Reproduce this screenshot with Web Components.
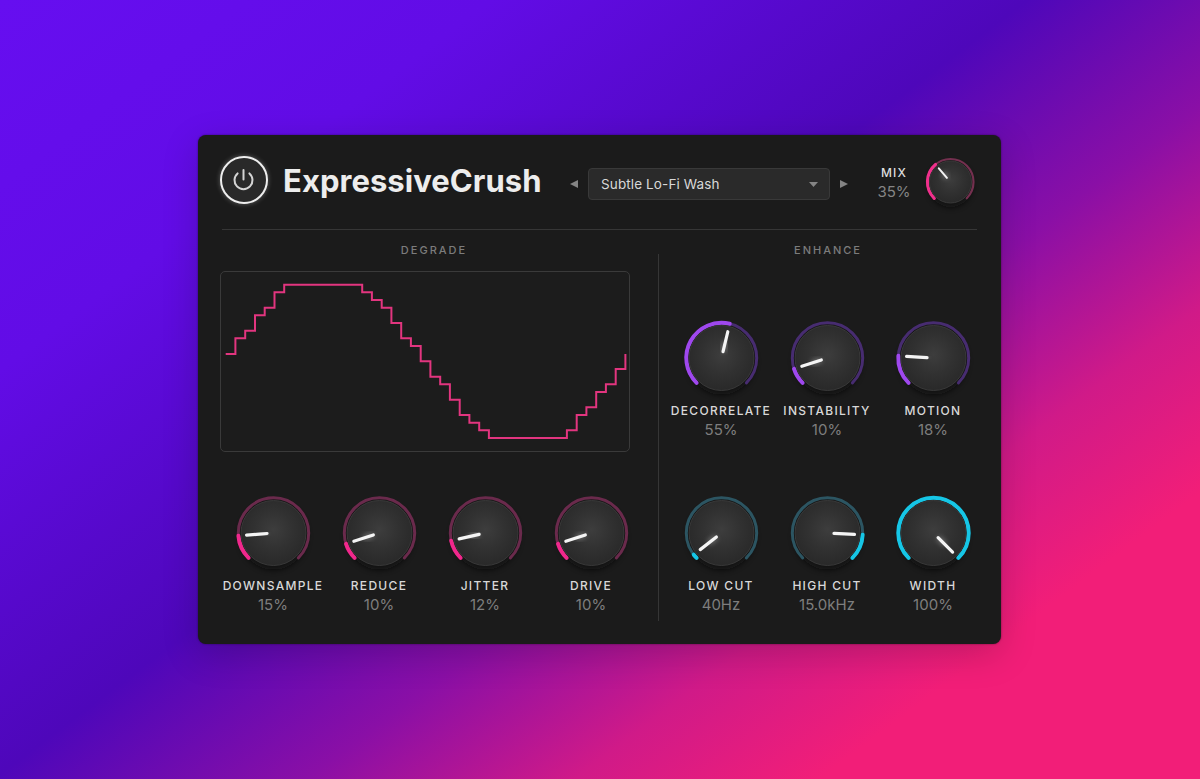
<!DOCTYPE html>
<html>
<head>
<meta charset="utf-8">
<title>ExpressiveCrush</title>
<style>
    html, body { margin: 0; height: 100%; }
    body {
        display: flex;
        align-items: center;
        justify-content: center;
        overflow: hidden;
        font-family: Inter, "Liberation Sans", sans-serif;
        background: linear-gradient(143deg, #660ef0 0%, #620ce6 22%, #4e07ba 46%, #8a0fa6 60%, #d01a88 72%, #f21e78 83%, #f21e78 100%);
    }
</style>
</head>
<body>
<fx-panel>
    <fx-power slot="power"></fx-power>
    <span slot="title">ExpressiveCrush</span>
    <fx-preset slot="preset">Subtle Lo-Fi Wash</fx-preset>
    <fx-knob slot="mix" size="small" value="35" accent="#f0308c" dim="#74304f"></fx-knob>

    <fx-scope slot="degrade"></fx-scope>
    <fx-knob-row slot="degrade" columns="4">
        <fx-knob value="15" accent="#f0288c" dim="#6a2a4c">DOWNSAMPLE<span slot="value">15%</span></fx-knob>
        <fx-knob value="10" accent="#f0288c" dim="#6a2a4c">REDUCE<span slot="value">10%</span></fx-knob>
        <fx-knob value="12" accent="#f0288c" dim="#6a2a4c">JITTER<span slot="value">12%</span></fx-knob>
        <fx-knob value="10" accent="#f0288c" dim="#6a2a4c">DRIVE<span slot="value">10%</span></fx-knob>
    </fx-knob-row>

    <fx-knob-row slot="enhance" columns="3" style="margin-top:63px">
        <fx-knob value="55" accent="#9f48ee" dim="#472c70">DECORRELATE<span slot="value">55%</span></fx-knob>
        <fx-knob value="10" accent="#9f48ee" dim="#472c70">INSTABILITY<span slot="value">10%</span></fx-knob>
        <fx-knob value="18" accent="#9f48ee" dim="#472c70">MOTION<span slot="value">18%</span></fx-knob>
    </fx-knob-row>
    <fx-knob-row slot="enhance" columns="3" style="margin-top:56px">
        <fx-knob value="2.6" accent="#16c6e6" dim="#2c5562">LOW CUT<span slot="value">40Hz</span></fx-knob>
        <fx-knob value="84.4" arc="end" accent="#16c6e6" dim="#2c5562">HIGH CUT<span slot="value">15.0kHz</span></fx-knob>
        <fx-knob value="100" accent="#16c6e6" dim="#2c5562">WIDTH<span slot="value">100%</span></fx-knob>
    </fx-knob-row>
</fx-panel>

<script>
// Painel principal: cabecalho + duas colunas
class FxPanel extends HTMLElement {
    constructor() {
        super();
        this.attachShadow({ mode: "open" });
        this.shadowRoot.innerHTML = `
            <style>
                :host {
                    display: block;
                    width: 803px;
                    margin-left: -1px;
                    box-sizing: border-box;
                    padding: 21px 0 23px 22px;
                    background: #1b1b1b;
                    border-radius: 8px;
                    box-shadow: 0 0 2px rgba(0,0,0,.5), 0 10px 36px rgba(0,0,0,.18);
                }
                header { display: flex; align-items: flex-start; height: 48px; }
                .title {
                    margin: 5px 0 0 15px;
                    width: 287px;
                    font-size: 31px;
                    line-height: 39px;
                    font-weight: 700;
                    letter-spacing: .05px;
                    color: #ededed;
                    white-space: nowrap;
                }
                .preset { margin-top: 12px; }
                .mix {
                    width: 50px;
                    margin: 8px 0 0 21px;
                    text-align: center;
                }
                .mix b {
                    display: block;
                    font-size: 12px;
                    line-height: 18px;
                    font-weight: 500;
                    letter-spacing: 1.2px;
                    color: #dedede;
                }
                .mix span { display: block; font-size: 15px; line-height: 20px; color: #858585; }
                .mixknob { margin: 0 0 0 5px; }
                hr {
                    height: 1px;
                    border: 0;
                    margin: 25px 24px 0 2px;
                    background: #363636;
                }
                .body { display: flex; }
                section { flex: none; }
                .left { width: 428px; }
                .right { width: 320px; }
                h2 {
                    margin: 13px 0 14px;
                    font-size: 11px;
                    line-height: 14px;
                    font-weight: 500;
                    letter-spacing: 2px;
                    text-align: center;
                    color: #7c7c7c;
                }
                .right h2 { margin-bottom: 0; }
                .sep {
                    flex: none;
                    width: 1px;
                    height: 367px;
                    margin: 24px 9px 0 10px;
                    background: #363636;
                }
            </style>
            <header>
                <slot name="power"></slot>
                <div class="title"><slot name="title"></slot></div>
                <div class="preset"><slot name="preset"></slot></div>
                <div class="mix"><b>MIX</b><span>35%</span></div>
                <div class="mixknob"><slot name="mix"></slot></div>
            </header>
            <hr>
            <div class="body">
                <section class="left">
                    <h2>DEGRADE</h2>
                    <slot name="degrade"></slot>
                </section>
                <div class="sep"></div>
                <section class="right">
                    <h2>ENHANCE</h2>
                    <slot name="enhance"></slot>
                </section>
            </div>
        `;
    }
}

class FxPower extends HTMLElement {
    constructor() {
        super();
        this.attachShadow({ mode: "open" });
        this.shadowRoot.innerHTML = `
            <style>
                :host {
                    display: block;
                    flex: none;
                    width: 48px;
                    height: 48px;
                    box-sizing: border-box;
                    border: 2.5px solid #eeeeee;
                    border-radius: 50%;
                    background: #292929;
                    box-shadow: 0 0 5px rgba(255,255,255,.3);
                }
                svg { display: block; }
            </style>
            <svg width="43" height="43" viewBox="0 0 43 43" fill="none" stroke="#d4d4d4" stroke-width="2" stroke-linecap="round">
                <path d="M15.6 15.4 A9 9 0 1 0 27.4 15.4"/>
                <path d="M21.5 12 V21.5"/>
            </svg>
        `;
    }
}

class FxPreset extends HTMLElement {
    constructor() {
        super();
        this.attachShadow({ mode: "open" });
        this.shadowRoot.innerHTML = `
            <style>
                :host { display: flex; align-items: center; gap: 10px; }
                .box {
                    width: 242px;
                    height: 32px;
                    box-sizing: border-box;
                    display: flex;
                    align-items: center;
                    justify-content: space-between;
                    padding: 0 11px 0 12px;
                    background: #2a2a2a;
                    border: 1px solid #393939;
                    border-radius: 4px;
                    font-size: 13.5px;
                    letter-spacing: .12px;
                    color: #d8d8d8;
                }
                svg { display: block; flex: none; fill: #858585; }
            </style>
            <svg width="8" height="8" viewBox="0 0 8 8"><path d="M0 4 8 0V8Z"/></svg>
            <div class="box">
                <span><slot></slot></span>
                <svg width="9" height="5" viewBox="0 0 9 5"><path d="M0 0H9L4.5 5Z"/></svg>
            </div>
            <svg width="8" height="8" viewBox="0 0 8 8"><path d="M8 4 0 0V8Z"/></svg>
        `;
    }
}

// Forma de onda em degraus
class FxScope extends HTMLElement {
    constructor() {
        super();
        this.attachShadow({ mode: "open" });
        const levels = [83, 67.3, 59.7, 44.3, 36.7, 21.3,
            13.7, 13.7, 13.7, 13.7, 13.7, 13.7, 13.7, 13.7,
            21.3, 29, 36.7, 52, 67.3, 75, 90.3, 105.7, 113.3, 128.7, 144, 151.7, 159.3,
            167, 167, 167, 167, 167, 167, 167, 167,
            159.3, 144, 136.3, 121, 113.3, 98];
        const step = 9.75;
        let d = `M5.7 ${levels[0]}`;
        levels.forEach((y, i) => {
            const x = 5.7 + i * step;
            if (i > 0) d += ` V${y}`;
            d += ` H${(x + step).toFixed(1)}`;
        });
        d += " V83";
        this.shadowRoot.innerHTML = `
            <style>
                :host {
                    display: block;
                    width: 410px;
                    height: 181px;
                    box-sizing: border-box;
                    border: 1px solid #3a3a3a;
                    border-radius: 5px;
                    background: #1c1c1c;
                }
                svg { display: block; margin: -1px; }
            </style>
            <svg width="410" height="181" viewBox="0 0 410 181" fill="none">
                <path d="${d}" stroke="#e2357f" stroke-width="2"/>
            </svg>
        `;
    }
}

class FxKnobRow extends HTMLElement {
    constructor() {
        super();
        this.attachShadow({ mode: "open" });
        this.shadowRoot.innerHTML = `
            <style>
                :host {
                    display: grid;
                    grid-template-columns: repeat(var(--cols), 106px);
                    margin-top: 43px;
                }
            </style>
            <slot></slot>
        `;
        this.style.setProperty("--cols", this.getAttribute("columns"));
    }
}

let knobId = 0;

class FxKnob extends HTMLElement {
    constructor() {
        super();
        this.attachShadow({ mode: "open" });
        const small = this.getAttribute("size") === "small";
        const value = parseFloat(this.getAttribute("value"));
        const accent = this.getAttribute("accent");
        const dim = this.getAttribute("dim");
        const fromEnd = this.getAttribute("arc") === "end";

        // medidas do knob grande e do pequeno (MIX)
        const box = small ? 52 : 76;
        const c = box / 2;
        const cx = c + .5;
        const ringR = small ? 23 : 35.2;
        const bodyR = small ? 21.5 : 33;
        const tip = small ? 18 : 27;
        const inner = small ? 5.5 : 6.5;
        const angle = -135 + value * 2.7;

        const pt = (r, deg) => {
            const a = (deg - 90) * Math.PI / 180;
            return [(cx + r * Math.cos(a)).toFixed(2), (c + r * Math.sin(a)).toFixed(2)];
        };
        const arc = (from, to) => {
            const [x1, y1] = pt(ringR, from);
            const [x2, y2] = pt(ringR, to);
            const large = to - from > 180 ? 1 : 0;
            return `M${x1} ${y1} A${ringR} ${ringR} 0 ${large} 1 ${x2} ${y2}`;
        };
        const [lx1, ly1] = pt(inner, angle);
        const [lx2, ly2] = pt(tip, angle);
        const active = fromEnd ? arc(angle, 135) : arc(-135, angle);
        const id = "k" + knobId++;

        this.shadowRoot.innerHTML = `
            <style>
                :host {
                    display: flex;
                    flex-direction: column;
                    align-items: center;
                    text-align: center;
                    white-space: nowrap;
                }
                svg { display: block; overflow: visible; }
                .label {
                    margin-top: 7px;
                    font-size: 12px;
                    line-height: 16px;
                    font-weight: 500;
                    letter-spacing: 1.3px;
                    color: #d8d8d8;
                }
                .value {
                    margin-top: 2px;
                    font-size: 15px;
                    line-height: 18px;
                    color: #7e7e7e;
                }
                :host([size="small"]) .label, :host([size="small"]) .value { display: none; }
            </style>
            <svg width="${box}" height="${box}" viewBox="0 0 ${box} ${box}" fill="none">
                <defs>
                    <radialGradient id="${id}b" cx="50%" cy="45%" r="55%">
                        <stop offset="0" stop-color="#3d3d3d"/>
                        <stop offset=".55" stop-color="#313131"/>
                        <stop offset="1" stop-color="#292929"/>
                    </radialGradient>
                    <filter id="${id}s" x="-40%" y="-40%" width="180%" height="180%"><feGaussianBlur stdDeviation="3"/></filter>
                    <filter id="${id}g" x="-100%" y="-100%" width="300%" height="300%"><feGaussianBlur stdDeviation="2.5"/></filter>
                </defs>
                <circle cx="${cx}" cy="${c + 3.5}" r="${bodyR}" fill="#0f0f0f" opacity=".8" filter="url(#${id}s)"/>
                <path d="${arc(-135, 135)}" stroke="${dim}" stroke-width="${small ? 2.2 : 3}" stroke-linecap="round"/>
                <path d="${active}" stroke="${accent}" stroke-width="${small ? 3.2 : 4}" stroke-linecap="round"/>
                <circle cx="${cx}" cy="${c}" r="${bodyR - .5}" fill="url(#${id}b)" stroke="#393939"/>
                <line x1="${lx1}" y1="${ly1}" x2="${(+lx1 + +lx2) / 2}" y2="${(+ly1 + +ly2) / 2}" stroke="#fff" stroke-width="5" opacity=".3" filter="url(#${id}g)"/>
                <line x1="${lx1}" y1="${ly1}" x2="${lx2}" y2="${ly2}" stroke="#f4f4f4" stroke-width="${small ? 2 : 3.2}" stroke-linecap="round"/>
            </svg>
            <div class="label"><slot></slot></div>
            <div class="value"><slot name="value"></slot></div>
        `;
    }
}

customElements.define("fx-panel", FxPanel);
customElements.define("fx-power", FxPower);
customElements.define("fx-preset", FxPreset);
customElements.define("fx-scope", FxScope);
customElements.define("fx-knob-row", FxKnobRow);
customElements.define("fx-knob", FxKnob);
</script>
</body>
</html>
